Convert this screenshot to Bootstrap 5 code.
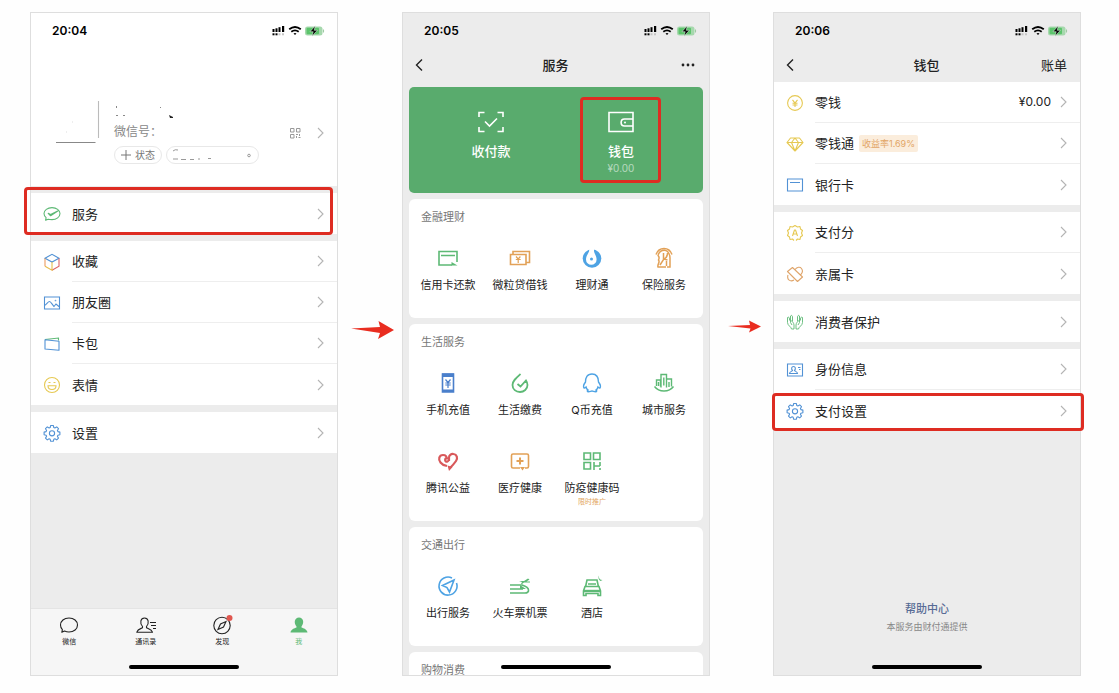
<!DOCTYPE html>
<html lang="zh-CN">
<head>
<meta charset="utf-8">
<meta name="viewport" content="width=device-width, initial-scale=1">
<title>支付设置</title>
<link href="https://cdn.jsdelivr.net/npm/bootstrap@5.3.0/dist/css/bootstrap.min.css" rel="stylesheet">
<style>
body{font-family:Inter,"Noto Sans CJK SC",sans-serif;font-size:13px;line-height:20px;color:#222;background:#fefefe}
a{color:inherit;text-decoration:none}
svg{display:block;flex:none;fill:none;stroke:currentColor;stroke-width:1.1}
.solid{fill:currentColor;stroke:none}
.thin{stroke-width:1}
.stage{padding:12px 38px 17px 30px;min-height:664px}
.phone{flex:1 1 0;min-width:0;background:#ececec;border:1px solid #dedede}
.arrow-a{width:64px;padding:308px 0 0 5px}
.arrow-b{width:63px;padding:308px 0 0 5px}
.status{height:36px;padding:0 12px 0 21px;font-size:12px;font-weight:600;color:#000}
.titlebar{display:grid;grid-template-columns:1fr auto 1fr;height:31px;margin-bottom:2px;padding:0 13px 0 12px;font-weight:500}
.titlebar-roomy{margin-bottom:7px}
.plain{border:0;background:none;padding:0;color:inherit}
.profile{padding:52px 13px 22px 25px}
.profile-text{padding-left:14px}
.profile-id{font-size:12px}
.avatar{width:44px;height:43px}
.pill{height:18px;border:1px solid #e8e8e8;border-radius:9px;background:#fff;padding:0 6px;font-size:10px;line-height:16px;color:#777}
.pill-wide{width:93px}
.muted{color:#888}
.faint{color:#999}
.rows{background:#fff;margin-bottom:7px}
.rows-first{margin-top:7px}
.line{height:41px;padding-left:12px;gap:11px}
.line-body{padding-right:13px;gap:5px}
.line:not(:last-child) .line-body{border-bottom:1px solid #eee}
.chev{color:#b4b4b4}
.balance{font-size:12px}
.frame{position:absolute;border:3px solid #de2c22;border-radius:4px;pointer-events:none;z-index:2}
.frame-service{inset:-6px 4px -1px -7px}
.frame-setting{inset:3px -4px 0 -2px}
.frame-wallet{inset:10px 25px 10px 24px}
.yield{background:#fbeddc;color:#e2a566;border-radius:2px;font-size:9px;line-height:17px;padding:0 3px}
.tabs{background:#f6f6f6;height:67px;border-top:1px solid #e4e4e4;padding-top:5px;font-size:7px;line-height:12px}
.home-bar{position:absolute;bottom:6px;left:50%;width:110px;height:4px;margin-left:-55px;border-radius:2px;background:#000}
.pay{height:106px;margin:0 6px 6px;padding:0 17px;border-radius:5px;background:#59ab6d;color:#fff}
.pay-tile{padding-top:22px;font-weight:500}
.pay-tile svg{margin-bottom:6px;stroke-width:1.6}
.pay-sum{font-size:10px;line-height:14px;font-weight:400;opacity:.55}
.panel{margin:0 6px 6px;padding:0 3px 5px;border-radius:6px;background:#fff}
.panel h2{font-size:11px;line-height:16px;font-weight:400;color:#777;margin:0;padding:10px 9px}
.tool{height:78px;padding-top:11px;font-size:11px;line-height:16px;white-space:nowrap}
.tool svg{margin-bottom:7px;stroke-width:1.6}
.tool-note{font-size:7px;line-height:12px;color:#e3a75e}
.g{color:#5db975}.o{color:#e2a157}.b{color:#4ea3e4}.r{color:#d9595b}.y{color:#e6c953}.bl{color:#5292d5}.navy{color:#4a7fcb}.tan{color:#dfa56b}
.helper{padding-bottom:40px;font-size:9px;line-height:16px;color:#888}
.helper a{font-size:11px;line-height:20px;font-weight:500;color:#576b95}
</style>
</head>
<body>
<svg width="0" height="0" class="position-absolute" aria-hidden="true">
  <symbol id="chev" viewBox="0 0 7 12"><path d="M1 1l5 5-5 5"/></symbol>
  <symbol id="back" viewBox="0 0 8 14"><path d="M7 1.500L1.500 7 7 12.500" stroke-width="1.400"/></symbol>
  <symbol id="signals" viewBox="0 0 53 12">
    <g fill="#000" stroke="none"><rect x="0.500" y="4" width="2" height="3"/><rect x="3.500" y="3.300" width="2" height="3.700"/><rect x="6.500" y="2.200" width="2" height="4.800"/><rect x="10" y="1" width="2.200" height="6"/><rect x="0.500" y="8.300" width="2" height="2"/><rect x="3.500" y="8.300" width="2" height="2"/></g>
    <g fill="#c5c5c5" stroke="none"><rect x="6.500" y="8.300" width="2" height="2"/><rect x="10" y="8.300" width="2" height="2"/></g>
    <g stroke="#000" stroke-width="1.800"><path d="M17.200 4.300q5.800-4.600 11.600 0M19.300 6.800q3.700-2.800 7.400 0"/><path d="M21.500 8.400q1.500-.9 3 0L23 10z" fill="#000" stroke="none"/></g>
    <rect x="33" y="1.500" width="17.500" height="9" rx="2.500" fill="#a6d8ad" stroke="none"/><rect x="34.500" y="2.800" width="12.500" height="6.400" rx="1" fill="#5cc46c" stroke="none"/><path d="M51.500 4.500v3" stroke="#9fcaa4"/>
    <path d="M43.300.8L38 6.700h3.200l-1.200 4.500 5.400-5.900h-3.200z" fill="#000" stroke="#eef8ef" stroke-width=".5"/>
  </symbol>
  <symbol id="gear" viewBox="0 0 18 18"><path d="M7.700 1.500h2.600l.5 2 1.100.5 1.800-1.100 1.800 1.800-1.100 1.800.5 1.100 2 .5v2.600l-2 .5-.5 1.100 1.100 1.800-1.800 1.800-1.800-1.100-1.100.5-.5 2H7.700l-.5-2-1.100-.5-1.800 1.100-1.800-1.800 1.100-1.800-.5-1.100-2-.5V8.100l2-.5.5-1.100-1.100-1.800 1.800-1.800L6.100 4l1.100-.5z" stroke-linejoin="round"/><circle cx="9" cy="9.300" r="2.600"/></symbol>
</svg>

<main class="stage d-flex vh-100">

  <section class="phone d-flex flex-column position-relative" aria-label="我">
    <div class="bg-white">
      <div class="status d-flex align-items-center justify-content-between"><span>20:04</span><svg width="53" height="12"><use href="#signals"/></svg></div>
      <div class="profile d-flex">
        <svg class="avatar" viewBox="0 0 44 43"><path d="M42.500 0v37" stroke="#bbb"/><path d="M0 41.500h39.500" stroke="#888"/><path d="M16 21h1M10 31h1" stroke="#ddd"/></svg>
        <div class="profile-text flex-grow-1 d-flex flex-column">
          <svg width="100" height="21" viewBox="0 0 100 21"><g fill="#888" stroke="none"><rect x="2" y="5" width="1" height="2"/><rect x="2" y="14" width="2" height="1"/><rect x="9" y="14" width="2" height="1"/><rect x="46" y="6" width="1" height="1"/></g><path d="M55 14l4 2v1h-3z" fill="#222" stroke="none"/></svg>
          <div class="profile-id muted">微信号：</div>
          <div class="d-flex mt-1 gap-1">
            <button class="pill d-flex align-items-center gap-1" type="button"><svg class="thin" width="10" height="10"><path d="M5 0v10M0 5h10"/></svg>状态</button>
            <button class="pill pill-wide" type="button" aria-label="朋友状态"><svg class="thin faint" width="80" height="14"><path d="M0 3q2-2 5-1M0 11h5M8 11.500h5M17 11.500h4M25 11h2M35 10.500h3"/><circle cx="76" cy="7.500" r="1.300"/></svg></button>
          </div>
        </div>
        <div class="d-flex align-items-center gap-3"><svg class="thin faint" width="12" height="12"><path d="M1.500 1.500h3.500v3.500H1.500zM7.500 1.500H11v3.500H7.500zM1.500 7.500H5V11H1.500zM7 7.500h2M10.500 7v2M7.500 9v2M9.500 10.500h2"/></svg><svg class="chev" width="7" height="12"><use href="#chev"/></svg></div>
      </div>
    </div>
    <div class="rows rows-first">
      <a href="#" class="line d-flex align-items-center position-relative"><svg class="g" width="18" height="18"><path d="M5.200 14.200L2.600 15.300l.5-2.600C1.800 11.600 1 10.200 1 8.600c0-3.300 3.500-6 8-6s8 2.700 8 6-3.500 6-8 6c-1.400 0-2.700-.1-3.800-.4zM5.200 8.300l2.400 2.500 8-5.200-8 3.800z" stroke-linejoin="round"/></svg><span class="line-body h-100 flex-grow-1 d-flex align-items-center justify-content-between">服务<svg class="chev" width="7" height="12"><use href="#chev"/></svg></span><span class="frame frame-service"></span></a>
    </div>
    <div class="rows">
      <a href="#" class="line d-flex align-items-center"><svg width="18" height="18"><path d="M2 5.200L9 1.300l7 3.900-7 3.900z" stroke="#5292d5"/><path d="M16 5.500v7.700l-7 4" stroke="#db6468"/><path d="M9 9.100v8.100l-7-4" stroke="#e8bd4c"/><path d="M2 13.200V5.500" stroke="#ec9c60"/></svg><span class="line-body h-100 flex-grow-1 d-flex align-items-center justify-content-between">收藏<svg class="chev" width="7" height="12"><use href="#chev"/></svg></span></a>
      <a href="#" class="line d-flex align-items-center"><svg class="bl" width="18" height="18"><path d="M1.500 3h15v12h-15zM1.500 11.500C4 10 5 7.500 6.500 7.500S9 10.500 11 12.500l2-2.500 3.500 3"/><circle cx="12.500" cy="6.500" r=".3"/></svg><span class="line-body h-100 flex-grow-1 d-flex align-items-center justify-content-between">朋友圈<svg class="chev" width="7" height="12"><use href="#chev"/></svg></span></a>
      <a href="#" class="line d-flex align-items-center"><svg class="bl" width="18" height="18"><path d="M2 4.500L15.500 3v2.500" stroke="#5db975"/><path d="M2 4.800l14 1.400v9.100L2 14z" stroke-linejoin="round"/></svg><span class="line-body h-100 flex-grow-1 d-flex align-items-center justify-content-between">卡包<svg class="chev" width="7" height="12"><use href="#chev"/></svg></span></a>
      <a href="#" class="line d-flex align-items-center"><svg class="y" width="18" height="18"><circle cx="9" cy="9" r="7.500"/><path d="M5.500 6.500h2M10.500 6.500h2M5 9.800h8c0 5-8 5-8 0z"/></svg><span class="line-body h-100 flex-grow-1 d-flex align-items-center justify-content-between">表情<svg class="chev" width="7" height="12"><use href="#chev"/></svg></span></a>
    </div>
    <div class="rows">
      <a href="#" class="line d-flex align-items-center"><svg class="bl" width="18" height="18"><use href="#gear"/></svg><span class="line-body h-100 flex-grow-1 d-flex align-items-center justify-content-between">设置<svg class="chev" width="7" height="12"><use href="#chev"/></svg></span></a>
    </div>
    <nav class="tabs d-flex mt-auto text-center">
      <a href="#" class="flex-fill w-25 d-flex flex-column align-items-center"><svg width="20" height="22"><path d="M5.500 17L2.800 18.300l.6-2.700C2 14.300 1.500 12.600 1.500 11c0-4 3.600-7 8.500-7s8.500 3 8.500 7-3.600 7-8.500 7c-1.700 0-3.200-.4-4.500-1z" stroke-linejoin="round"/></svg>微信</a>
      <a href="#" class="flex-fill w-25 d-flex flex-column align-items-center"><svg width="20" height="22"><path d="M6.500 12.500C3.500 9 4.500 4 8.500 4s5 5 2 8.500v1.200c1.500 1 5 1.500 6 4.500H.8c1-3 4-3.500 5.700-4.500zM14 8.500h6M15 11.500h5M17 14.500h3" stroke-linejoin="round"/></svg>通讯录</a>
      <a href="#" class="flex-fill w-25 d-flex flex-column align-items-center"><svg width="22" height="22"><circle cx="11" cy="11.500" r="8.200"/><path d="M15 7.500l-2.500 5.500L7 15.500l2.500-5.500z"/><circle cx="18.500" cy="4" r="3" fill="#e0574f" stroke="none"/></svg>发现</a>
      <a href="#" class="flex-fill w-25 d-flex flex-column align-items-center g"><svg class="solid" width="20" height="22"><path d="M7.500 12.500C4.500 9 5.500 3.500 10 3.500s5.500 5.500 2.500 9v1c2 1 5.500 1.500 6 5h-17c.5-3.500 4-4 6-5z"/></svg>我</a>
    </nav>
    <span class="home-bar"></span>
  </section>

  <div class="arrow-a d-flex justify-content-center align-items-start"><svg width="43" height="20"><path d="M0 8.500L29 7 27.500 1 43 10 27 19l2-6z" fill="#e92d20" stroke="none"/></svg></div>

  <section class="phone position-relative overflow-hidden" aria-label="服务">
    <div class="status d-flex align-items-center justify-content-between"><span>20:05</span><svg width="53" height="12"><use href="#signals"/></svg></div>
    <header class="titlebar titlebar-roomy align-items-center"><button class="plain text-start" type="button" aria-label="返回"><svg width="8" height="14"><use href="#back"/></svg></button><span>服务</span><button class="plain d-flex justify-content-end" type="button" aria-label="更多"><svg class="solid" width="16" height="4"><circle cx="3" cy="2" r="1.400"/><circle cx="8" cy="2" r="1.400"/><circle cx="13" cy="2" r="1.400"/></svg></button></header>
    <div class="pay d-flex">
      <a href="#" class="pay-tile w-50 d-flex flex-column align-items-center"><svg width="26" height="26"><path d="M1 8V3.500h5.500M19.500 3.500H25V8M25 18v4.500h-5.500M6.500 22.500H1V18M7 12.500l4.500 4.500 7.500-7.500"/></svg>收付款</a>
      <a href="#" class="pay-tile w-50 d-flex flex-column align-items-center position-relative"><svg width="26" height="26"><path d="M1 3.500h24v19H1zM25 10h-8.500c-4.500 0-4.500 7 0 7H25"/><circle cx="17" cy="13.500" r="1" class="solid"/></svg>钱包<span class="pay-sum">¥0.00</span><span class="frame frame-wallet"></span></a>
    </div>
    <div class="panel">
      <h2>金融理财</h2>
      <div class="row row-cols-4 g-0 text-center">
        <a href="#" class="col tool d-flex flex-column align-items-center"><svg class="g" width="24" height="24"><path d="M16 19H3V5.500h18V16M5 9.500h14"/><path d="M15.500 16l6 3.500h-6z" class="solid"/></svg>信用卡还款</a>
        <a href="#" class="col tool d-flex flex-column align-items-center"><svg class="o" width="24" height="24"><path d="M2.500 8.500h15.500v10H2.500zM5 8V5.500h16.500V16.500H18"/><path d="M8 10.500l2.200 2.500 2.200-2.500M7.800 13.500h4.900M10.200 13v4" stroke-width="1.200"/></svg>微粒贷借钱</a>
        <a href="#" class="col tool d-flex flex-column align-items-center"><svg class="b" width="24" height="24"><circle cx="12" cy="12.500" r="9.300" class="solid"/><path d="M9.500 2L9 5.500C8 8 6 10 6 13.500a5.300 5.300 0 0 0 10.600 0C16.600 10 14 7 14 5V2z" fill="#fff" stroke="none"/><circle cx="11.500" cy="13" r="1.500" class="solid"/></svg>理财通</a>
        <a href="#" class="col tool d-flex flex-column align-items-center"><svg class="o" width="24" height="24"><path d="M4 8.500c3-8 13-8 16 0M6 10c1-6 7-7 9.500-4.500S18 10 18 12v9h-3M6 9.500c2 2 1 3 .5 4.500 2 2-1.500 4.500-.5 7h8M11.500 7v6l4 1M15.500 7c0 3-1 5-4 6.500L8 19M14.500 15v5" stroke-width="1.500"/></svg>保险服务</a>
      </div>
    </div>
    <div class="panel">
      <h2>生活服务</h2>
      <div class="row row-cols-4 g-0 text-center">
        <a href="#" class="col tool d-flex flex-column align-items-center"><svg class="navy" width="24" height="24"><path d="M6.500 3h11v18h-11z"/><path d="M6 2.500h12v3.500H6zM6 18.500h12V21H6z" class="solid"/><path d="M9.500 8.500l2.500 3 2.500-3M9.300 12h5.400M9.300 14h5.400M12 11.500V17" stroke-width="1.200"/></svg>手机充值</a>
        <a href="#" class="col tool d-flex flex-column align-items-center"><svg class="g" width="24" height="24"><path d="M12.500 3C8 7 4.500 10 4.500 14c0 4.500 3.500 7 7.500 7s7.500-3 7.500-7c0-2-.5-3-1.500-4.500l-5.500 6L9.500 13" stroke-width="1.800"/></svg>生活缴费</a>
        <a href="#" class="col tool d-flex flex-column align-items-center"><svg class="b" width="24" height="24"><path d="M12 3c-5 0-6.500 4-6.500 8-1.500 2-2.500 4.500-1.500 6 .8.500 1.300-.5 2-1 .3 1.500 1 2.300 2 3-1 .5-1 1.700.5 1.700 1.500 0 2.500-.7 3.500-.7s2 .7 3.500.7c1.500 0 1.500-1.200.5-1.700 1-.7 1.700-1.500 2-3 .7.500 1.200 1.500 2 1 1-1.500 0-4-1.500-6 0-4-1.500-8-6.500-8z" stroke-width="1.400"/></svg>Q币充值</a>
        <a href="#" class="col tool d-flex flex-column align-items-center"><svg class="g" width="24" height="24"><path d="M4.500 15V9h4v6.500M9 16.500V3.500h5.500V16.500M15 8h4.500v7.500M6.500 11v4M11.800 6.500v8M17 11v5M2.500 15.500c4.500 6 14.500 6 19 0" stroke-width="1.400"/></svg>城市服务</a>
        <a href="#" class="col tool d-flex flex-column align-items-center"><svg class="r" width="24" height="24"><path d="M13 12V8.500c0-2 2-4 4.500-3.500C21 5.500 22 9 20 12c-2 3-4 5-6.500 7.500M11 10.500c0-2-.5-4.500-4-4.500-4 0-5 4.500-2.500 7.500 1.500 2 4 3 6.500 3.500M10 9c-2.500 3 1 5 2.500 2.500" stroke-width="2.200"/><path d="M11.500 16.500l5 1.500-3.500 4z" class="solid"/></svg>腾讯公益</a>
        <a href="#" class="col tool d-flex flex-column align-items-center"><svg class="o" width="24" height="24"><path d="M12 19H5c-1 0-1.500-.5-1.500-1.500V6.500C3.500 5.500 4 5 5 5h14c1 0 1.500.5 1.500 1.500v11c0 1-.5 1.500-1.500 1.500h-2"/><path d="M12 8.500v7M8.500 12h7" stroke-width="2"/><path d="M12 18h5l-2.500 3.500z" class="solid"/></svg>医疗健康</a>
        <a href="#" class="col tool d-flex flex-column align-items-center"><svg class="g" width="24" height="24"><path d="M4 4h6.500v6.500H4zM13.500 4H20v6.500h-6.500zM4 13.500h6.500V20H4zM14 13v8M14 17h6M20 13v4M20 19v2"/></svg>防疫健康码<span class="tool-note">限时推广</span></a>
      </div>
    </div>
    <div class="panel">
      <h2>交通出行</h2>
      <div class="row row-cols-4 g-0 text-center">
        <a href="#" class="col tool d-flex flex-column align-items-center"><svg class="b" width="24" height="24"><path d="M16 4A9 9 0 1 0 20.500 9M18 6L6.500 11.500l4.500 2L13.500 18z"/></svg>出行服务</a>
        <a href="#" class="col tool d-flex flex-column align-items-center"><svg class="g" width="24" height="24"><path d="M2 11h12c3 1 6.500 3 6.500 5 .3 2-1.500 3-3.500 3H2M2 15h13"/><path d="M12 11l6 4h-6zM11 7h5l4-2.500 1.500 1-3 2H22v1h-6L14 10h-1l1-2z" class="solid"/></svg>火车票机票</a>
        <a href="#" class="col tool d-flex flex-column align-items-center"><svg class="g" width="24" height="24"><path d="M5.500 13L7 6h10l1.500 7M8 10h8M5 12.500h14l1.500 4.500v4.500h-2.500v-2H6v2H3.500V17z"/><path d="M4 17h16" stroke-width="2.400"/><path d="M19 1.500c-.5 3 1 4.500 3.500 4.500l-2 1C18.500 6 18 3.500 19 1.500z" class="solid"/></svg>酒店</a>
      </div>
    </div>
    <div class="panel">
      <h2>购物消费</h2>
    </div>
    <span class="home-bar"></span>
  </section>

  <div class="arrow-b d-flex justify-content-center align-items-start"><svg width="33" height="13"><path d="M0 6l22-1L21 .5l12 6-12 6 1.500-4z" fill="#e92d20" stroke="none"/></svg></div>

  <section class="phone d-flex flex-column position-relative" aria-label="钱包">
    <div class="status d-flex align-items-center justify-content-between"><span>20:06</span><svg width="53" height="12"><use href="#signals"/></svg></div>
    <header class="titlebar align-items-center"><button class="plain text-start" type="button" aria-label="返回"><svg width="8" height="14"><use href="#back"/></svg></button><span>钱包</span><a href="#" class="text-end fw-normal">账单</a></header>
    <div class="rows">
      <a href="#" class="line d-flex align-items-center"><svg class="y" width="18" height="18"><circle cx="9" cy="9" r="7.400"/><path d="M6.500 5.800L9 9l2.500-3.200M6.500 9.200h5M6.500 11h5M9 9v4"/></svg><span class="line-body h-100 flex-grow-1 d-flex align-items-center"><span class="me-auto">零钱</span><span class="balance me-1">¥0.00</span><svg class="chev" width="7" height="12"><use href="#chev"/></svg></span></a>
      <a href="#" class="line d-flex align-items-center"><svg class="y" width="18" height="18"><path d="M4.500 3h9L17 7.500 9 16 1 7.500zM1 7.500h16M5.500 7.500L9 3l3.500 4.500L9 16z" stroke-linejoin="round"/></svg><span class="line-body h-100 flex-grow-1 d-flex align-items-center">零钱通<span class="yield me-auto">收益率1.69%</span><svg class="chev" width="7" height="12"><use href="#chev"/></svg></span></a>
      <a href="#" class="line d-flex align-items-center"><svg class="bl" width="18" height="18"><path d="M1.500 3h15v12h-15zM4 6.500h10"/></svg><span class="line-body h-100 flex-grow-1 d-flex align-items-center justify-content-between">银行卡<svg class="chev" width="7" height="12"><use href="#chev"/></svg></span></a>
    </div>
    <div class="rows">
      <a href="#" class="line d-flex align-items-center"><svg class="y" width="18" height="18"><path d="M8 16.500L6.500 15l-2.500.5-.5-2.500-2-1.500L2.500 9l-1-2.500 2-1.500L4 2.500l2.500.5L9 1.500 11.500 3l2.500-.5.5 2.500 2 1.500-1 2.500 1 2.500-2 1.500-.5 2.500-2.500-.5-1.500 1.500M6.500 12l2-6h1l2 6M7.200 10h3.600" stroke-linejoin="round"/></svg><span class="line-body h-100 flex-grow-1 d-flex align-items-center justify-content-between">支付分<svg class="chev" width="7" height="12"><use href="#chev"/></svg></span></a>
      <a href="#" class="line d-flex align-items-center"><svg class="tan" width="18" height="18"><path d="M1.500 6.500l5-4 10 9.500-5 4.500zM9 4.500c2-2.500 5-3 6.500-1s1 4.500-1 6.500M2 10c-1.500 5 2.500 7 6 5" stroke-linejoin="round"/></svg><span class="line-body h-100 flex-grow-1 d-flex align-items-center justify-content-between">亲属卡<svg class="chev" width="7" height="12"><use href="#chev"/></svg></span></a>
    </div>
    <div class="rows">
      <a href="#" class="line d-flex align-items-center"><svg class="g" width="18" height="18"><path d="M8 16V12c0-2-2-4-3.500-5v2.500L6 12M8 16H5.500c0-2-4-3.500-4-6.500V4.500c1-1 2 0 2 1.500v1.500M4.500 7V3c1-1.500 2 0 2 1v4M10 16V12c0-2 2-4 3.500-5v2.500L12 12M10 16h2.500c0-2 4-3.500 4-6.500V4.500c-1-1-2 0-2 1.500v1.500M13.500 7V3c-1-1.500-2 0-2 1v4" stroke-width=".9"/></svg><span class="line-body h-100 flex-grow-1 d-flex align-items-center justify-content-between">消费者保护<svg class="chev" width="7" height="12"><use href="#chev"/></svg></span></a>
    </div>
    <div class="rows">
      <a href="#" class="line d-flex align-items-center"><svg class="bl" width="18" height="18"><path d="M1.500 3h15v12h-15zM6.500 9.500c-1.500-1.500-1-4 1-4s2.500 2.500 1 4c.5 1 3 1 3 3h-8c0-2 2.500-2 3-3zM12 6.500h2.500M13 8.500h1.500"/></svg><span class="line-body h-100 flex-grow-1 d-flex align-items-center justify-content-between">身份信息<svg class="chev" width="7" height="12"><use href="#chev"/></svg></span></a>
      <a href="#" class="line d-flex align-items-center position-relative"><svg class="bl" width="18" height="18"><use href="#gear"/></svg><span class="line-body h-100 flex-grow-1 d-flex align-items-center justify-content-between">支付设置<svg class="chev" width="7" height="12"><use href="#chev"/></svg></span><span class="frame frame-setting"></span></a>
    </div>
    <footer class="helper mt-auto text-center"><a href="#">帮助中心</a><div>本服务由财付通提供</div></footer>
    <span class="home-bar"></span>
  </section>

</main>
<script src="https://cdn.jsdelivr.net/npm/bootstrap@5.3.0/dist/js/bootstrap.bundle.min.js"></script>
</body>
</html>
